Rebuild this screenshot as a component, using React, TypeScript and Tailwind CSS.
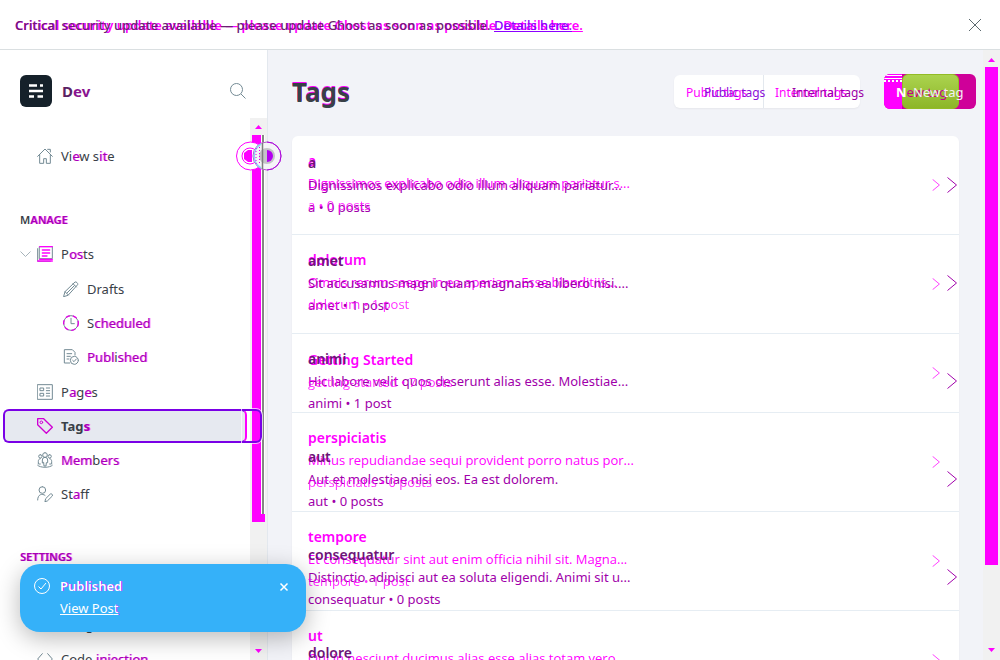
import type { ReactNode } from "react";

type Tag = { name: string; text?: string; meta: string };

const backTags: Tag[] = [
  { name: "a", text: "Dignissimos explicabo odio illum aliquam pariatur s...", meta: "a • 0 posts" },
  { name: "dolorum", text: "Omnis rerum saepe in ea aperiam. Esse blanditiis...", meta: "dolorum • 1 post" },
  { name: "Getting Started", meta: "getting-started • 7 posts" },
  { name: "perspiciatis", text: "Minus repudiandae sequi provident porro natus por...", meta: "perspiciatis • 0 posts" },
  { name: "tempore", text: "Et consequatur sint aut enim officia nihil sit. Magna...", meta: "tempore • 1 post" },
  { name: "ut", text: "Qui in nesciunt ducimus alias esse alias totam vero....", meta: "ut • 0 posts" },
];

const frontTags: Tag[] = [
  { name: "a", text: "Dignissimos explicabo odio illum aliquam pariatur...", meta: "a • 0 posts" },
  { name: "amet", text: "Sit accusamus magni quam magnam ea libero nisi....", meta: "amet • 1 post" },
  { name: "animi", text: "Hic labore velit quos deserunt alias esse. Molestiae...", meta: "animi • 1 post" },
  { name: "aut", text: "Aut et molestiae nisi eos. Ea est dolorem.", meta: "aut • 0 posts" },
  { name: "consequatur", text: "Distinctio adipisci aut ea soluta eligendi. Animi sit u...", meta: "consequatur • 0 posts" },
  { name: "dolore", text: "Et quia nesciunt.", meta: "dolore • 0 posts" },
];

/* Letters in square brackets are drawn in the highlight colour. */
function Marked({ children }: { children: string }) {
  return (
    <span>
      {children.split(/[[\]]/).map((part, i) =>
        i % 2 ? <span key={i} className="text-[#a800b4] [text-shadow:1px_0_#ff00ff99]">{part}</span> : part
      )}
    </span>
  );
}

function Icon({ children, className = "text-[#738a94]" }: { children: ReactNode; className?: string }) {
  return (
    <svg viewBox="0 0 24 24" aria-hidden="true" className={`size-4 shrink-0 ${className}`} fill="none" stroke="currentColor" strokeWidth="1.5" strokeLinecap="round" strokeLinejoin="round">
      {children}
    </svg>
  );
}

const icons = {
  home: <path d="M1 12.5 12 1.5l11 11M4 10v13h6v-7h4v7h6V10M16 2h4v4" />,
  posts: (
    <>
      <path d="M4 1h19v18H4zM1 4v19h19" />
      <path stroke="#f0f" strokeWidth="2" d="M4 1h19M1 22.500h22M4 20h19M8 6h11M8 10.500h11M8 15h7" />
    </>
  ),
  pencil: <path d="m1 23 2-7L18 1.500c1.500-1 5 2 4 4L8 21zM3 16l5 5M15 4l5 5M6 18 17 7" />,
  clock: (
    <>
      <circle cx="12" cy="12" r="11" />
      <circle cx="12" cy="12" r="11" stroke="#e400e8" strokeWidth="2" strokeDasharray="5 6" />
      <path d="M12 5v8h5" />
    </>
  ),
  published: <path d="M10 21H2V1h12l4 4v4M6 7h7M6 11h5M6 15h3M23 17a6 6 0 1 1-12 0 6 6 0 0 1 12 0M14.500 17l2 2 3.500-4" />,
  pages: <path d="M1 1h22v22H1zM5 6h5v4H5zM5 14h5v4H5zM14 6h5M14 10h5M14 14h5M14 18h5" />,
  tag: (
    <>
      <path strokeWidth="2" d="M1 2v8l13 13 9-9L10 1H1z" />
      <circle cx="6.500" cy="6.500" r="2" />
    </>
  ),
  members: <path d="M12 1a3.500 3.500 0 1 1 0 7 3.500 3.500 0 0 1 0-7M8 16v-4a4 4 0 0 1 8 0v4h-2l-.5 5h-3L10 16zM5 4a2.500 2.500 0 1 0 0 5 2.500 2.500 0 0 0 0-5M19 4a2.500 2.500 0 1 1 0 5 2.500 2.500 0 0 1 0-5M5 18H2v-4c0-2 1-4 3-4M19 18h3v-4c0-2-1-4-3-4M1 20c4 4 18 4 22 0" />,
  staff: <path d="M8 1a5 5 0 1 1 0 10A5 5 0 0 1 8 1M1 21c0-9 7-10 11-7M12 23l1-4 7-7c2-1 4 1 3 3l-7 7z" />,
  code: <path d="m8 4-7 8 7 8M16 4l7 8-7 8" />,
};

function Item({ icon, label, child = false }: { icon?: ReactNode; label: string; child?: boolean }) {
  return (
    <li>
      <a href="#" className={`flex h-[34px] items-center gap-2 ${child ? "pl-[63px]" : "pl-[37px]"}`}>
        {icon ? <Icon>{icon}</Icon> : <span className="size-4" />}
        <Marked>{label}</Marked>
      </a>
    </li>
  );
}

function Arrow({ down = false }: { down?: boolean }) {
  return (
    <svg viewBox="0 0 7 4" aria-hidden="true" className={`h-1 w-[7px] ${down ? "rotate-180" : ""}`} fill="#f0f">
      <path d="M0 4 3.500 0 7 4z" />
    </svg>
  );
}

function Heading({ children }: { children: string }) {
  return <h2 className="flex h-[34px] items-center pl-5 text-[11px] font-semibold"><Marked>{children}</Marked></h2>;
}

function TagList({ tags, front = false }: { tags: Tag[]; front?: boolean }) {
  return (
    <ul className={`col-start-1 row-start-1 min-w-0 ${front ? "text-[#a000aa]" : "text-[#f0f]"}`}>
      {tags.map((tag) => (
        <li key={tag.name} className={front ? "" : "border-b border-[#e6edf3]"}>
          <a
            href="#"
            className={`flex items-center justify-between pl-4 ${
              front ? "h-[98px] pr-0.5" : tag.text ? "h-[98px] pr-[19px]" : "h-[78px] pr-[19px]"
            }`}
          >
            <span className={`flex flex-col text-[13px] leading-[22px] whitespace-nowrap ${front ? "" : "pb-1"}`}>
              <span className={`text-sm leading-[22px] font-semibold ${front ? "text-[#6d1478]" : ""}`}>{tag.name}</span>
              {tag.text && <span className={front ? "" : "font-['Open_Sans','Noto_Sans',sans-serif]"}>{tag.text}</span>}
              <span className={front ? "" : "font-['Open_Sans','Noto_Sans',sans-serif] opacity-80"}>{tag.meta}</span>
            </span>
            <svg viewBox="0 0 10 16" aria-hidden="true" className={front ? "h-4 w-2.5" : "h-3 w-2"} fill="none" stroke="currentColor">
              <path d="m.5.5 9 7.500-9 7.500" />
            </svg>
          </a>
        </li>
      ))}
    </ul>
  );
}

const stack = "col-start-1 row-start-1";

export default function App() {
  return (
    <div className="relative flex h-screen flex-col overflow-hidden bg-white font-['Noto_Sans',sans-serif] text-[13px] leading-5 text-[#394047]">
      <header className="flex h-[50px] shrink-0 items-center justify-between border-b border-[#dadfe1] pr-[18px] pl-[15px]">
        <div className="grid pt-0.5 font-medium whitespace-nowrap">
          <p aria-hidden="true" className={`${stack} pb-0.5 font-semibold text-[#f0f]`}>
            Critical security update available — please update Ghost as soon as possible. <span className="underline">Details here.</span>
          </p>
          <p className={`${stack} text-[#6b2072]`}>
            Critical security update available — please update Ghost as soon as possible.{" "}
            <a href="#" className="text-[#8b00ff] underline">Details here.</a>
          </p>
        </div>
        <button aria-label="Close" className="size-3.5">
          <svg viewBox="0 0 14 14" className="size-3.5" stroke="#5d6a70" fill="none"><path d="m1 1 12 12M13 1 1 13" /></svg>
        </button>
      </header>

      <div className="flex min-h-0 flex-1">
        <aside className="relative flex w-[268px] shrink-0 flex-col border-r border-[#e3e8ee]">
          <div className="flex h-[68px] shrink-0 items-center pt-[14px] pr-[21px] pl-5">
            <svg viewBox="0 0 32 32" aria-hidden="true" className="size-8">
              <rect width="32" height="32" rx="6" fill="#15212a" />
              <path d="M9 10.500h8M20 10.500h3M9 16h14M9 21.500h5M17.500 21.500H23" stroke="#fff" strokeWidth="2.500" />
            </svg>
            <span className="ml-2.5 flex-1 text-[15px] font-bold text-[#5b2263]">D<span className="text-[#8a1490]">ev</span></span>
            <button aria-label="Search" className="size-4">
              <svg viewBox="0 0 16 16" className="size-4" fill="none" stroke="#738a94"><circle cx="6.500" cy="6.500" r="6" /><path d="m11 11 4.500 4.500" /></svg>
            </button>
          </div>
          <div className="flex min-h-0 flex-1">
            <nav className="flex-1 overflow-hidden">
              <ul className="pt-[21px]"><Item icon={icons.home} label="Vi[e]w s[it]e" /></ul>
              <div className="pt-[30px]"><Heading>M[ANAGE]</Heading></div>
              <ul>
                <li>
                  <div className="flex h-[34px] items-center pl-5">
                    <svg viewBox="0 0 11 6" aria-hidden="true" className="mr-1.5 h-1.5 w-[11px]" fill="none" stroke="#a7b4bb"><path d="m.5.5 5 5 5-5" /></svg>
                    <a href="#" className="flex items-center gap-2"><Icon>{icons.posts}</Icon><Marked>P[os]ts</Marked></a>
                  </div>
                  <ul className="py-px">
                    <Item child icon={icons.pencil} label="Drafts" />
                    <Item child icon={icons.clock} label="S[cheduled]" />
                    <Item child icon={icons.published} label="[Publ]i[shed]" />
                  </ul>
                </li>
                <Item icon={icons.pages} label="P[a]g[e]s" />
                <li className="pl-[3px]">
                  <a href="#" aria-current="page" className="mr-[3px] flex h-[34px] items-center gap-2 rounded-md border-2 border-[#7a00e6] border-r-[#f0f] bg-[#e6e9f0] pl-8 font-bold">
                    <Icon className="text-[#cf00d4]">{icons.tag}</Icon>
                    <Marked>Tag[s]</Marked>
                  </a>
                </li>
                <Item icon={icons.members} label="[Mem]b[ers]" />
                <Item icon={icons.staff} label="St[a]ff" />
              </ul>
              <div className="pt-[29px]"><Heading>[SETTINGS]</Heading></div>
              <ul>
                <Item label="General" />
                <Item label="Integrations" />
                <Item icon={icons.code} label="Code [injection]" />
              </ul>
            </nav>
            <div className="flex w-[17px] flex-col items-center bg-[#f1f1f1] py-[7px]">
              <Arrow />
              <div className="mt-1.5 flex h-[387px] w-[13px] shrink-0 justify-end bg-[#f0f]">
                <div className="flex h-[379px] w-1 justify-center bg-white"><div className="w-0.5 bg-[#868686]" /></div>
              </div>
              <div className="flex-1" />
              <Arrow down />
            </div>
          </div>

          <div className="absolute top-[359px] right-[5px] h-[34px] w-5 rounded-r-md border-2 border-l-0 border-[#7a00e6] outline outline-white/70" />
          <svg viewBox="0 0 46 30" aria-hidden="true" className="absolute top-[91px] left-[236px] h-[30px] w-[46px]" fill="none">
            <circle cx="14.500" cy="15" r="14" fill="#fff" stroke="#f0f" />
            <path d="M16 9h-4l-4 3v6l4 3h4z" fill="#f0f" />
            <circle cx="14" cy="15" r="8" stroke="#f0f" />
            <circle cx="31" cy="15" r="14" fill="#f5f5f8" stroke="#b05cc8" />
            <path d="M31 1a14 14 0 0 1 0 28" stroke="#b000e0" />
            <path d="M25 3a14 14 0 0 0 0 24" stroke="#8fd3f4" strokeWidth="1.500" />
            <circle cx="31" cy="15" r="8" fill="#c4c4c8" />
            <path d="M31 9a6 6 0 0 1 0 12z" fill="#b400f0" />
            <path d="M26.500 2v26" stroke="#7d7d7d" strokeWidth="1.500" />
            <path d="M20 7v16M23.500 6v18" stroke="#e000e8" strokeDasharray="1 2" />
          </svg>
        </aside>

        <main className="min-w-0 flex-1 bg-[#f2f3f8] px-6 pt-6">
          <div className="flex h-[35px] items-center">
            <h1 className="flex-1 text-[26px] leading-9 font-bold [text-shadow:0_-1px_#f0f]">Tags</h1>
            <div className="mr-6 flex h-[33px] w-[186px] rounded-md bg-white text-xs shadow-xs">
              <button className="grid w-[90px] shrink-0 items-center border-r border-[#e3e8ee] pt-0.5 pl-3 text-left whitespace-nowrap">
                <span aria-hidden="true" className={`${stack} text-[#f0f]`}>Public tags</span>
                <span className={`${stack} pl-[18px] text-[#8b10d8]`}>Public tags</span>
              </button>
              <button className="grid w-24 shrink-0 items-center pt-0.5 pl-[11px] text-left whitespace-nowrap">
                <span aria-hidden="true" className={`${stack} text-[#f0f]`}>Internal tags</span>
                <span className={`${stack} pl-[17px] text-[#9c00a8]`}>Internal tags</span>
              </button>
            </div>
            <div className="w-[75px]">
              <button className="grid h-[35px] w-[92px] items-center overflow-hidden rounded-md bg-[#cf0099] text-left whitespace-nowrap">
                <span className={`${stack} grid h-full grid-cols-[18px_57px_17px]`}>
                  <span className="bg-[#f0f]">
                    <span className="mt-px block h-px bg-white" />
                    <span className="mt-0.5 block h-px bg-white" />
                    <span className="mt-px block border-t-2 border-dotted border-white" />
                  </span>
                  <span className="rounded-md border border-[#93bb25] bg-linear-to-b from-[#abd34e] to-[#8db626]" />
                </span>
                <span aria-hidden="true" className={`${stack} pl-3 text-[#c4008c]`}><span className="font-bold text-white">N</span>ew tag</span>
                <span className={`${stack} pl-[29px] text-[#f2f2f2]`}>New tag</span>
              </button>
            </div>
          </div>
          <div className="mt-[27px] grid rounded-md bg-white shadow-xs">
            <TagList tags={backTags} />
            <TagList tags={frontTags} front />
          </div>
        </main>

        <div className="flex w-[17px] shrink-0 flex-col items-center bg-[#f1f1f1] py-2">
          <Arrow />
          <div className="mt-[5px] h-[498px] w-[13px] shrink-0 bg-[#f0f]" />
          <div className="flex-1" />
          <Arrow down />
        </div>
      </div>

      <section role="status" className="absolute bottom-7 left-5 flex h-[68px] w-[286px] items-start rounded-[20px] bg-[#35b1f9] pt-3 pr-[17px] pl-3.5 text-white shadow-[0_6px_24px_rgba(0,0,0,0.28)]">
        <svg viewBox="0 0 16 16" aria-hidden="true" className="mt-0.5 size-4" fill="none" stroke="currentColor"><circle cx="8" cy="8" r="7.500" /><path d="m4.500 8.500 2.500 2.500 5-6" /></svg>
        <div className="ml-2.5 flex-1 leading-[22px]">
          <p className="-mt-px font-semibold [text-shadow:1px_0_#a020ff]">Published</p>
          <a href="#" className="block w-fit underline">View Pos<span className="[text-shadow:1px_0_#a020ff]">t</span></a>
        </div>
        <button aria-label="Dismiss" className="mt-1.5 size-2.5">
          <svg viewBox="0 0 10 10" className="size-2.5" fill="none" stroke="currentColor" strokeWidth="1.500"><path d="m1.500 1.500 7 7M8.500 1.500l-7 7" /></svg>
        </button>
      </section>
    </div>
  );
}
